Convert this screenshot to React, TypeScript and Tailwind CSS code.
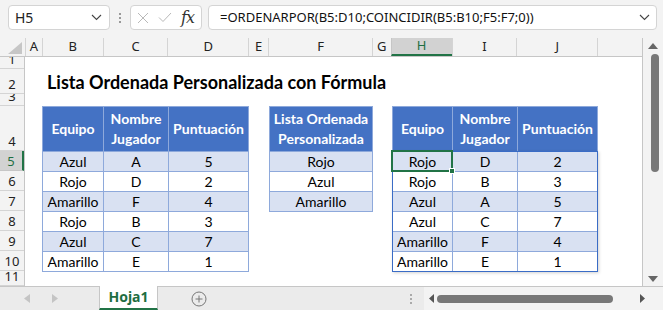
import React from "react";

const COLS: { k: string; w: number }[] = [
  { k: "A", w: 17 },
  { k: "B", w: 61 },
  { k: "C", w: 65 },
  { k: "D", w: 81 },
  { k: "E", w: 20 },
  { k: "F", w: 104 },
  { k: "G", w: 19 },
  { k: "H", w: 61 },
  { k: "I", w: 65 },
  { k: "J", w: 81 },
  { k: "", w: 45 },
];

const ROWS: { n: number; h: number }[] = [
  { n: 1, h: 12 },
  { n: 2, h: 25 },
  { n: 3, h: 12 },
  { n: 4, h: 45 },
  { n: 5, h: 20 },
  { n: 6, h: 20 },
  { n: 7, h: 20 },
  { n: 8, h: 20 },
  { n: 9, h: 20 },
  { n: 10, h: 20 },
  { n: 11, h: 15 },
];

const T1 = [
  ["Azul", "A", "5"],
  ["Rojo", "D", "2"],
  ["Amarillo", "F", "4"],
  ["Rojo", "B", "3"],
  ["Azul", "C", "7"],
  ["Amarillo", "E", "1"],
];
const T3 = [
  ["Rojo", "D", "2"],
  ["Rojo", "B", "3"],
  ["Azul", "A", "5"],
  ["Azul", "C", "7"],
  ["Amarillo", "F", "4"],
  ["Amarillo", "E", "1"],
];

const cellFont = "font-['Lato','Carlito',sans-serif] text-[14px]";

function Table({
  widths,
  headers,
  rows,
}: {
  widths: number[];
  headers: React.ReactNode[];
  rows: string[][];
}) {
  return (
    <div className={`flex flex-col border-l border-t border-[#8ea9db] ${cellFont} text-black`}>
      <div className="flex h-[45px]">
        {headers.map((h, i) => (
          <div
            key={i}
            style={{ width: widths[i] }}
            className="flex items-center justify-center bg-[#4472c4] border-r border-b border-[#8ea9db] text-white font-bold leading-[20px] text-center"
          >
            {h}
          </div>
        ))}
      </div>
      {rows.map((r, ri) => (
        <div key={ri} className="flex h-[20px]">
          {r.map((c, ci) => (
            <div
              key={ci}
              style={{ width: widths[ci] }}
              className={`flex items-center justify-center border-r border-b border-[#8ea9db] leading-[19px] ${
                ri % 2 === 0 ? "bg-[#d9e1f2]" : "bg-white"
              }`}
            >
              {c}
            </div>
          ))}
        </div>
      ))}
    </div>
  );
}

function Chevron({ className = "" }: { className?: string }) {
  return (
    <svg width="11" height="7" viewBox="0 0 11 7" className={className}>
      <path d="M1 1 L5.5 5.5 L10 1" fill="none" stroke="#444" strokeWidth="1.1" />
    </svg>
  );
}

function TopBar() {
  return (
    <div className="h-[38px] flex items-start pt-[5px] pl-[8px] font-['Noto_Sans',sans-serif]">
      <div className="w-[102px] h-[25px] bg-white border border-[#d4d4d4] rounded-[4px] flex items-center justify-between pl-[6px] pr-[7px]">
        <span className="text-[14px] text-[#222]">H5</span>
        <Chevron />
      </div>
      <div className="w-[20px] h-[25px] flex flex-col items-center justify-center gap-[2px]">
        <div className="w-[2px] h-[2px] bg-[#999]" />
        <div className="w-[2px] h-[2px] bg-[#999]" />
        <div className="w-[2px] h-[2px] bg-[#999]" />
      </div>
      <div className="w-[72px] h-[25px] bg-white border border-[#d4d4d4] rounded-[4px] flex items-center pl-[6px] gap-[9px]">
        <svg width="12" height="12" viewBox="0 0 12 12">
          <path d="M1 1 L11 11 M11 1 L1 11" stroke="#b9b9b9" strokeWidth="1" fill="none" />
        </svg>
        <svg width="14" height="11" viewBox="0 0 14 11">
          <path d="M1 5.5 L5 9.5 L13 1" stroke="#b9b9b9" strokeWidth="1" fill="none" />
        </svg>
        <span className="font-['DejaVu_Serif',serif] italic text-[16px] text-[#333] leading-none tracking-[-1px]">fx</span>
      </div>
      <div className="ml-[6px] w-[449px] h-[25px] bg-white border border-[#d4d4d4] rounded-[4px] flex items-center justify-between pl-[11px] pr-[6px]">
        <span className="text-[13px] text-[#111]">
          =ORDENARPOR(B5:D10;COINCIDIR(B5:B10;F5:F7;0))
        </span>
        <Chevron />
      </div>
    </div>
  );
}

function ColHeaders() {
  return (
    <div className="h-[19px] flex bg-[#f3f3f3] border-b border-[#c6c6c6] font-['Noto_Sans',sans-serif] text-[13px] text-[#222]">
      <div className="w-[25px] relative">
        <svg width="14" height="12" viewBox="0 0 14 12" className="absolute right-[3px] bottom-[2px]">
          <path d="M14 0 L14 12 L0 12 Z" fill="#c6c6c6" />
        </svg>
      </div>
      {COLS.map((c, i) => (
        <div
          key={i}
          style={{ width: c.w }}
          className={`flex items-center justify-center border-l ${
            c.k === "H"
              ? "bg-[#d2d2d2] border-[#c6c6c6] text-[#1e6e42] border-b-2 border-b-[#217346]"
              : "border-[#d4d4d4]"
          }`}
        >
          {c.k}
        </div>
      ))}
    </div>
  );
}

function RowHeaders() {
  return (
    <div className="w-[25px] flex flex-col border-r border-[#c6c6c6] bg-[#f3f3f3] font-['Noto_Sans',sans-serif] text-[13px] text-[#222]">
      {ROWS.map((r) => (
        <div
          key={r.n}
          style={{ height: r.h }}
          className={`flex items-end justify-center overflow-hidden border-b leading-[18px] ${
            r.n === 5 ? "bg-[#d2d2d2] text-[#1e6e42] border-[#c6c6c6] border-r-2 border-r-[#217346]" : "border-[#d4d4d4]"
          }`}
        >
          <span>{r.n}</span>
        </div>
      ))}
    </div>
  );
}

function Grid() {
  return (
    <div className="w-[617px] bg-white flex flex-col relative overflow-hidden">
      <div className="h-[12px]" />
      <div className="h-[25px] flex items-end pl-[22px]">
        <span className="font-['Lato','Carlito',sans-serif] font-bold text-[18px] leading-[24px] text-black">
          Lista Ordenada Personalizada con Fórmula
        </span>
      </div>
      <div className="h-[12px]" />
      <div className="h-[165px] flex items-start">
        <div className="w-[17px]" />
        <Table
          widths={[61, 65, 80]}
          headers={["Equipo", <>Nombre<br />Jugador</>, "Puntuación"]}
          rows={T1}
        />
        <div className="w-[20px]" />
        <Table
          widths={[103]}
          headers={[<>Lista Ordenada<br />Personalizada</>]}
          rows={[["Rojo"], ["Azul"], ["Amarillo"]]}
        />
        <div className="w-[19px]" />
        <div className="relative">
          <Table
            widths={[60, 65, 80]}
            headers={["Equipo", <>Nombre<br />Jugador</>, "Puntuación"]}
            rows={T3}
          />
          <div className="absolute left-0 right-0 top-[45px] bottom-0 border border-[#3a6cc6] shadow-[1px_1px_3px_rgba(0,0,0,0.18)] pointer-events-none" />
          <div className="absolute left-[-1px] top-[44px] w-[62px] h-[22px] border-2 border-[#217346] pointer-events-none">
            <div className="absolute right-[-4px] bottom-[-4px] w-[6px] h-[6px] bg-[#217346] border border-white" />
          </div>
        </div>
      </div>
      <div className="h-[15px]" />
    </div>
  );
}

function VScroll() {
  return (
    <div className="w-[20px] flex flex-col items-center bg-[#f3f3f3] pt-[4px]">
      <svg width="10" height="6" viewBox="0 0 10 6" className="mt-[1px]">
        <path d="M5 0 L10 6 L0 6 Z" fill="#666" />
      </svg>
      <div className="mt-[5px] w-[8px] h-[118px] rounded-full bg-[#787878] ml-[4px]" />
      <div className="flex-1" />
      <svg width="10" height="6" viewBox="0 0 10 6" className="mb-[4px]">
        <path d="M0 0 L10 0 L5 6 Z" fill="#666" />
      </svg>
    </div>
  );
}

function TabBar() {
  return (
    <div className="h-[24px] flex bg-[#ebebeb] font-['Noto_Sans',sans-serif] border-t border-[#c6c6c6]">
      <div className="w-[99px] flex items-center pl-[24px] gap-[22px]">
        <svg width="6" height="9" viewBox="0 0 6 9">
          <path d="M6 0 L6 9 L0 4.5 Z" fill="#c4c4c4" />
        </svg>
        <svg width="6" height="9" viewBox="0 0 6 9">
          <path d="M0 0 L0 9 L6 4.5 Z" fill="#c4c4c4" />
        </svg>
      </div>
      <div className="w-[60px] -mt-px bg-white border-x border-[#c6c6c6] border-b-2 border-b-[#217346] flex items-center justify-center">
        <span className="text-[14px] font-bold text-[#1e6e42] leading-none">Hoja1</span>
      </div>
      <div className="w-[82px] flex items-center justify-center">
        <svg width="16" height="16" viewBox="0 0 16 16">
          <circle cx="8" cy="8" r="7" fill="none" stroke="#777" strokeWidth="1" />
          <path d="M8 4.5 V11.5 M4.5 8 H11.5" stroke="#777" strokeWidth="1" />
        </svg>
      </div>
      <div className="w-[171px]" />
      <div className="w-[2px] flex flex-col items-center justify-center gap-[2px]">
        <div className="w-[2px] h-[2px] bg-[#aaa]" />
        <div className="w-[2px] h-[2px] bg-[#aaa]" />
        <div className="w-[2px] h-[2px] bg-[#aaa]" />
      </div>
      <div className="w-[12px]" />
      <div className="w-[240px] bg-[#f3f3f3] flex items-center pl-[5px]">
        <svg width="5" height="9" viewBox="0 0 5 9">
          <path d="M5 0 L5 9 L0 4.5 Z" fill="#555" />
        </svg>
        <div className="ml-[3px] w-[176px] h-[8px] rounded-full bg-[#787878]" />
        <div className="flex-1" />
        <svg width="5" height="9" viewBox="0 0 5 9" className="mr-[18px]">
          <path d="M0 0 L0 9 L5 4.5 Z" fill="#555" />
        </svg>
      </div>
      <div className="flex-1 bg-[#f3f3f3]" />
    </div>
  );
}

export default function App() {
  return (
    <div className="w-[663px] h-[310px] bg-[#f3f3f3] overflow-hidden flex flex-col">
      <TopBar />
      <div className="h-[248px] flex">
        <div className="w-[643px] flex flex-col border-r border-[#c6c6c6]">
          <ColHeaders />
          <div className="flex flex-1 overflow-hidden">
            <RowHeaders />
            <Grid />
          </div>
        </div>
        <VScroll />
      </div>
      <TabBar />
    </div>
  );
}
